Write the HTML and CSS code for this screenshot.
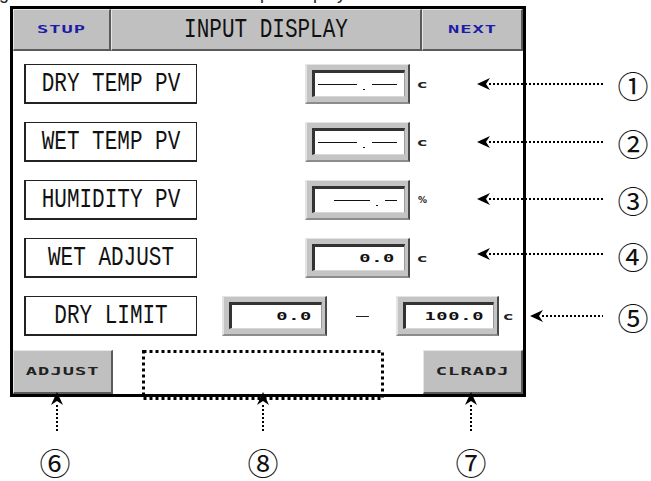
FILE: index.html
```html
<!DOCTYPE html>
<html lang="en">
<head>
  <meta charset="UTF-8">
  <title>Input Display</title>
  <link rel="stylesheet" href="styles.css">
</head>
<body>
  <div class="page">
    <div class="caption"><p><span class="cap-fig">Fig</span><span class="cap-title">Input display</span></p></div>

    <div class="screen">
      <div class="topbar">
        <div class="key blue"><span class="wide">STUP</span></div>
        <div class="key title"><span class="mono">INPUT DISPLAY</span></div>
        <div class="key blue"><span class="wide">NEXT</span></div>
      </div>

      <div class="rows">
        <div class="row">
          <div class="label"><span class="mono">DRY TEMP PV</span></div>
          <div class="val single">
            <div class="field dashes"><i class="long"></i><i class="dot"></i><i class="short"></i></div>
          </div>
          <span class="unit wide">c</span>
        </div>

        <div class="row">
          <div class="label"><span class="mono">WET TEMP PV</span></div>
          <div class="val single">
            <div class="field dashes"><i class="long"></i><i class="dot"></i><i class="short"></i></div>
          </div>
          <span class="unit wide">c</span>
        </div>

        <div class="row">
          <div class="label"><span class="mono">HUMIDITY PV</span></div>
          <div class="val single">
            <div class="field dashes right"><i class="long"></i><i class="dot"></i><i class="short tiny"></i></div>
          </div>
          <span class="unit pct">%</span>
        </div>

        <div class="row">
          <div class="label"><span class="mono">WET ADJUST</span></div>
          <div class="val single">
            <div class="field num"><span class="wide">0.0</span></div>
          </div>
          <span class="unit wide">c</span>
        </div>

        <div class="row">
          <div class="label"><span class="mono">DRY LIMIT</span></div>
          <div class="val lo">
            <div class="field num"><span class="wide">0.0</span></div>
          </div>
          <span class="range-dash"></span>
          <div class="val hi">
            <div class="field num"><span class="wide">100.0</span></div>
          </div>
          <span class="unit wide near">c</span>
        </div>
      </div>

      <div class="bottombar">
        <div class="key"><span class="wide">ADJUST</span></div>
        <div class="key"><span class="wide">CLRADJ</span></div>
      </div>
    </div>

    <!-- callouts drawn over the screen -->
    <svg class="marks" width="651" height="481" viewBox="0 0 651 481">
      <g class="dots">
        <line x1="489" y1="84" x2="603" y2="84"/>
        <line x1="489" y1="142" x2="603" y2="142"/>
        <line x1="489" y1="199" x2="603" y2="199"/>
        <line x1="489" y1="254" x2="603" y2="254"/>
        <line x1="542" y1="316" x2="603" y2="316"/>
        <line x1="57" y1="405" x2="57" y2="432"/>
        <line x1="263" y1="405" x2="263" y2="432"/>
        <line x1="471" y1="405" x2="471" y2="432"/>
      </g>
      <g class="heads">
        <polygon points="477,84 490,78 486,84 490,90"/>
        <polygon points="477,142 490,136 486,142 490,148"/>
        <polygon points="477,199 490,193 486,199 490,205"/>
        <polygon points="477,254 490,248 486,254 490,260"/>
        <polygon points="530,316 543,310 539,316 543,322"/>
        <polygon points="57,392 51,405 57,401 63,405"/>
        <polygon points="263,392 257,405 263,401 269,405"/>
        <polygon points="471,392 465,405 471,401 477,405"/>
      </g>
      <rect class="zone" x="143.5" y="351.5" width="239" height="47"/>
      <g class="circled">
        <text x="633" y="84">①</text>
        <text x="633" y="142">②</text>
        <text x="633" y="199">③</text>
        <text x="633" y="255">④</text>
        <text x="633" y="316">⑤</text>
        <text x="55" y="461">⑥</text>
        <text x="471" y="461">⑦</text>
        <text x="263" y="461">⑧</text>
      </g>
    </svg>
  </div>
</body>
</html>
```

FILE: styles.css
```css
body {
  margin: 0;
  background: #fff;
  font-family: "Liberation Sans", Arial, sans-serif;
}
.page {
  position: relative;
  width: 651px;
  height: 481px;
  overflow: hidden;
}

/* sliver of the figure caption cut off at the top */
.caption {
  height: 5px;
  overflow: hidden;
}
.caption p {
  margin: -16px 0 0 -16px;
  font-size: 18px;
  line-height: 18px;
  color: #222;
  white-space: nowrap;
}
.cap-title { margin-left: 236px; }

.screen {
  margin-top: 1px;
  margin-left: 10px;
  width: 516px;
  height: 391px;
  box-sizing: border-box;
  border: 3px solid #000;
  background: #fff;
  display: flex;
  flex-direction: column;
}

.mono {
  display: inline-block;
  font-family: "Liberation Mono", "DejaVu Sans Mono", monospace;
  font-size: 21px;
  line-height: 1;
  color: #111;
  white-space: pre;
  transform: scaleY(1.3);
}
.wide {
  display: inline-block;
  font-family: "DejaVu Sans Mono", monospace;
  font-weight: bold;
  font-size: 11px;
  line-height: 1;
  letter-spacing: 0.6px;
  color: #222;
  transform: scaleX(1.7);
}

.topbar {
  display: grid;
  grid-template-columns: 98px 1fr 101px;
  height: 42px;
}
.key {
  box-sizing: border-box;
  background: #c0c0c0;
  border-top: 1px solid #e6e6e6;
  border-left: 1px solid #e6e6e6;
  border-right: 2px solid #5a5a5a;
  border-bottom: 2px solid #5a5a5a;
  display: flex;
  align-items: center;
  justify-content: center;
}
.key.blue .wide { color: #1c1ca8; }

.rows {
  display: flex;
  flex-direction: column;
  gap: 18px;
  padding: 13px 0 0 11px;
}
.row {
  display: flex;
  align-items: stretch;
  height: 40px;
}
.label {
  width: 173px;
  box-sizing: border-box;
  border: 1px solid #222;
  border-left-width: 2px;
  border-bottom-width: 2px;
  display: flex;
  align-items: center;
  justify-content: center;
}

.val {
  width: 105px;
  box-sizing: border-box;
  background: #c4c4c4;
  border-top: 1px solid #e4e4e4;
  border-left: 2px solid #e4e4e4;
  border-right: 2px solid #4a4a4a;
  border-bottom: 2px solid #8c8c8c;
  padding: 5px 3px 5px 5px;
  display: flex;
}
.val.single { margin-left: 108px; }
.val.lo { margin-left: 25px; }
.val.hi { margin-left: 27px; width: 103px; }

.field {
  flex: 1;
  background: #fff;
  border-top: 3px solid #333;
  border-left: 3px solid #333;
  border-right: 1px solid #9a9a9a;
  border-bottom: 1px solid #d8d8d8;
  display: flex;
  align-items: center;
}
.field.num {
  justify-content: flex-end;
  padding-right: 9px;
}
.field.num .wide {
  letter-spacing: 0.4px;
  color: #111;
  transform-origin: right center;
}

.dashes { padding-left: 3px; }
.dashes.right {
  justify-content: flex-end;
  padding-right: 7px;
}
.dashes i {
  display: block;
  height: 0;
  border-top: 1.5px solid #111;
}
.dashes .long { width: 39px; }
.dashes .dot { width: 2px; margin: 10px 7px 0 6px; }
.dashes .short { width: 25px; }
.dashes.right .long { width: 36px; }
.dashes .short.tiny { width: 12px; }

.unit {
  align-self: center;
  margin-left: 9px;
}
.unit.near { margin-left: 6px; }
.unit.pct {
  font-family: "DejaVu Sans", sans-serif;
  font-weight: bold;
  font-size: 9px;
  margin-left: 8px;
  color: #222;
}
.range-dash {
  align-self: center;
  width: 13px;
  margin-left: 29px;
  border-top: 1.5px solid #222;
}

.bottombar {
  margin-top: auto;
  display: flex;
  justify-content: space-between;
  height: 44px;
}
.bottombar .key { width: 100px; }

.marks {
  position: absolute;
  left: 0;
  top: 0;
  pointer-events: none;
}
.dots line {
  stroke: #000;
  stroke-width: 2;
  stroke-dasharray: 2 2;
}
.heads polygon { fill: #000; }
.zone {
  fill: none;
  stroke: #000;
  stroke-width: 3;
  stroke-dasharray: 3 3;
}
.circled text {
  font-family: "Noto Sans CJK KR", "DejaVu Sans", sans-serif;
  font-size: 31px;
  text-anchor: middle;
  dominant-baseline: central;
  fill: #111;
}
```
